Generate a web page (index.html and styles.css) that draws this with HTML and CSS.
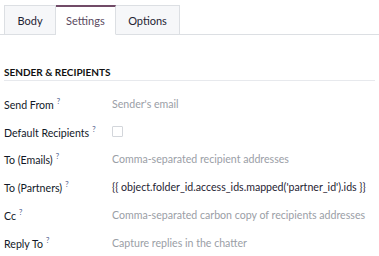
FILE: index.html
```html
<!DOCTYPE html>
<html>
  <head>
    <title>Mail Template</title>
    <link rel="stylesheet" href="styles.css">
  </head>
  <body>
    <div class="tabs">
      <a class="tab">Body</a>
      <a class="tab active">Settings</a>
      <a class="tab">Options</a>
    </div>

    <div class="section">
      <h3 class="section-title">Sender &amp; Recipients</h3>

      <div class="row">
        <label class="label">Send From<sup>?</sup></label>
        <span class="value placeholder">Sender's email</span>
      </div>
      <div class="row">
        <label class="label">Default Recipients<sup>?</sup></label>
        <span class="value"><span class="checkbox"></span></span>
      </div>
      <div class="row">
        <label class="label">To (Emails)<sup>?</sup></label>
        <span class="value placeholder">Comma-separated recipient addresses</span>
      </div>
      <div class="row">
        <label class="label">To (Partners)<sup>?</sup></label>
        <span class="value">{{ object.folder_id.access_ids.mapped('partner_id').ids }}</span>
      </div>
      <div class="row">
        <label class="label">Cc<sup>?</sup></label>
        <span class="value placeholder">Comma-separated carbon copy of recipients addresses</span>
      </div>
      <div class="row">
        <label class="label">Reply To<sup>?</sup></label>
        <span class="value placeholder">Capture replies in the chatter</span>
      </div>
    </div>
  </body>
</html>
```

FILE: styles.css
```css
body {
  margin: 0;
  background: #fff;
  font-family: Lato, "Liberation Sans", sans-serif;
  font-size: 10.6px;
  color: #1f2433;
}
.tabs {
  display: flex;
  margin-top: 5px;
  padding-left: 4px;
  border-bottom: 1px solid #dcdfe3;
}
.tab {
  display: flex;
  align-items: center;
  justify-content: center;
  height: 28px;
  padding: 0 12.5px;
  margin-bottom: -1px;
  background: #f6f7f9;
  border: 1px solid #dcdfe3;
  border-left: none;
  color: #1f2433;
  font-size: 11px;
}
.tab:first-child {
  border-left: 1px solid #dcdfe3;
}
.tab.active {
  background: #fff;
  border-top: 2px solid #714b67;
  border-bottom-color: #fff;
  height: 27px;
  padding: 0 10px;
  color: #5a4a60;
}
.section {
  padding: 0 4px;
}
.section-title {
  margin: 31px 0 0 0;
  padding-bottom: 2px;
  border-bottom: 1px solid #e7e9ed;
  font-size: 10px;
  font-weight: bold;
  text-transform: uppercase;
  color: #111;
}
.section-title + .row {
  margin-top: 9px;
}
.row {
  display: flex;
  align-items: center;
  height: 27.8px;
}
.label {
  width: 108px;
  flex-shrink: 0;
  color: #111827;
}
.label sup {
  font-size: 7.5px;
  color: #4a5a8a;
  margin-left: 3px;
  vertical-align: 5px;
}
.value {
  white-space: nowrap;
}
.placeholder {
  color: #9a9ea6;
}
.checkbox {
  display: block;
  width: 9px;
  height: 9px;
  border: 1px solid #d3d6db;
  border-radius: 1px;
}
```
